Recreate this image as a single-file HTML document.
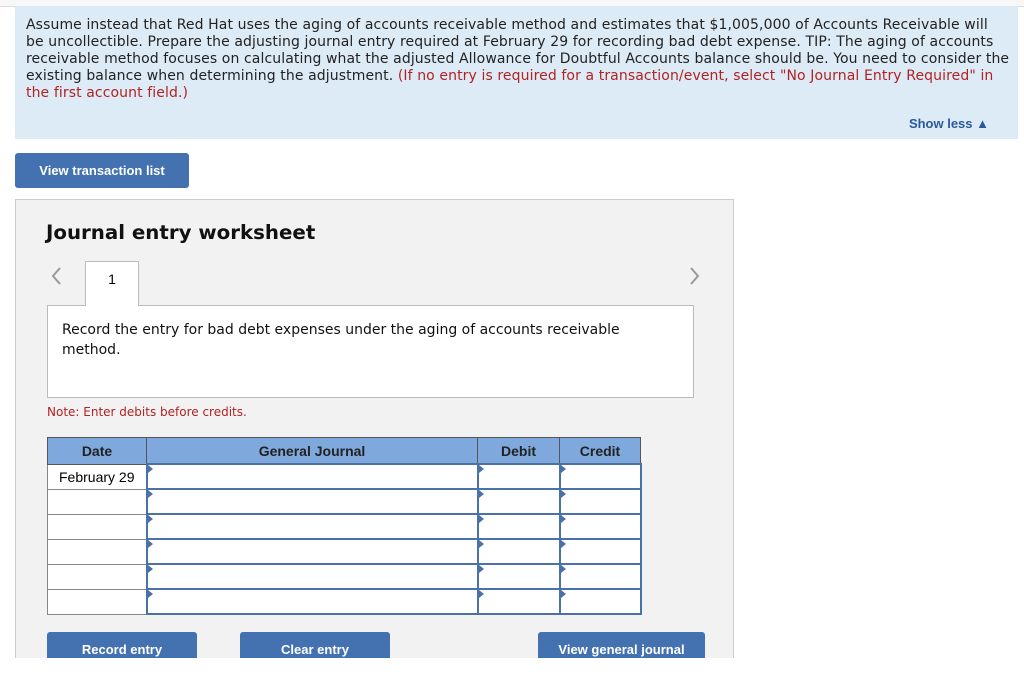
<!DOCTYPE html>
<html><head><style>
body{margin:0;width:1024px;height:677px;background:#fff;position:relative;overflow:hidden;font-family:"DejaVu Sans",Verdana,sans-serif}
.abs{position:absolute}
.tabs{left:0;top:0;width:1024px;height:6px;border-bottom:1px solid #ddd;background:#f7f7f7}
.info{left:15px;top:6px;width:1003px;height:133px;background:#ddebf7}
.info p{margin:0;position:absolute;left:11px;top:11px;width:990px;font-size:14px;line-height:17px;color:#222;letter-spacing:0.1px;white-space:nowrap}
.red{color:#b22222}
.show{right:35px;top:116px;font:bold 13px "Liberation Sans",Arial,sans-serif;color:#2a5a9c}
.btn{background:#4472b0;color:#fff;font:bold 13px "Liberation Sans",Arial,sans-serif;text-align:center;border-radius:3px}
.panel{left:15px;top:199px;width:719px;height:459px;background:#f2f2f2;border:1px solid #ccc;border-bottom:none;box-sizing:border-box}
h2{position:absolute;left:46px;top:221px;margin:0;font:bold 19.8px "DejaVu Sans",Verdana,sans-serif;color:#111}
.tab1{left:85px;top:261px;width:54px;height:45px;background:#fff;border:1px solid #bbb;border-bottom:none;box-sizing:border-box;text-align:center;font:14px "Liberation Sans",Arial;padding-top:9px;z-index:2}
.desc{left:47px;top:305px;width:647px;height:93px;background:#fff;border:1px solid #bbb;box-sizing:border-box}
.desc p{margin:0;position:absolute;left:14px;top:14px;width:620px;font-size:14px;line-height:20px;color:#111}
.note{left:47px;top:405px;font-size:12px;color:#b22222}
table{position:absolute;left:47px;top:437px;border-collapse:collapse;font:14px "Liberation Sans",Arial,sans-serif}
th{background:#7fa8dd;border:1px solid #555;height:25px;font-weight:bold;color:#222;padding:0}
td{border:1px solid #888;height:23px;background:#fff;padding:0;position:relative}
td.in{border:2px solid #4a72a8}
td.in:before{content:"";position:absolute;left:0;top:0;border-left:5px solid #4a72a8;border-top:4px solid transparent;border-bottom:4px solid transparent}
</style></head><body>
<div class="abs tabs"></div>
<div class="abs info"><p>Assume instead that Red Hat uses the aging of accounts receivable method and estimates that $1,005,000 of Accounts Receivable will<br>be uncollectible. Prepare the adjusting journal entry required at February 29 for recording bad debt expense. TIP: The aging of accounts<br>receivable method focuses on calculating what the adjusted Allowance for Doubtful Accounts balance should be. You need to consider the<br>existing balance when determining the adjustment. <span class="red">(If no entry is required for a transaction/event, select "No Journal Entry Required" in<br>the first account field.)</span></p></div>
<div class="abs show">Show less ▲</div>
<div class="abs btn" style="left:15px;top:153px;width:174px;height:35px;line-height:35px">View transaction list</div>
<div class="abs panel"></div>
<h2>Journal entry worksheet</h2>
<svg class="abs" style="left:50px;top:266px" width="14" height="20"><path d="M10 2 L3 10 L10 18" stroke="#999" stroke-width="2" fill="none"/></svg>
<svg class="abs" style="left:688px;top:266px" width="14" height="20"><path d="M3 2 L10 10 L3 18" stroke="#999" stroke-width="2" fill="none"/></svg>
<div class="abs tab1">1</div>
<div class="abs desc"><p>Record the entry for bad debt expenses under the aging of accounts receivable method.</p></div>
<div class="abs note">Note: Enter debits before credits.</div>
<table>
<tr><th style="width:98px">Date</th><th style="width:330px">General Journal</th><th style="width:81px">Debit</th><th style="width:80px">Credit</th></tr>
<tr><td style="text-align:center">February 29</td><td class="in"></td><td class="in"></td><td class="in"></td></tr>
<tr><td></td><td class="in"></td><td class="in"></td><td class="in"></td></tr>
<tr><td></td><td class="in"></td><td class="in"></td><td class="in"></td></tr>
<tr><td></td><td class="in"></td><td class="in"></td><td class="in"></td></tr>
<tr><td></td><td class="in"></td><td class="in"></td><td class="in"></td></tr>
<tr><td></td><td class="in"></td><td class="in"></td><td class="in"></td></tr>
</table>
<div class="abs btn" style="left:47px;top:632px;width:150px;height:35px;line-height:35px">Record entry</div>
<div class="abs btn" style="left:240px;top:632px;width:150px;height:35px;line-height:35px">Clear entry</div>
<div class="abs btn" style="left:538px;top:632px;width:167px;height:35px;line-height:35px">View general journal</div>
<div class="abs" style="left:0;top:658px;width:1024px;height:19px;background:#fff"></div>
</body></html>
